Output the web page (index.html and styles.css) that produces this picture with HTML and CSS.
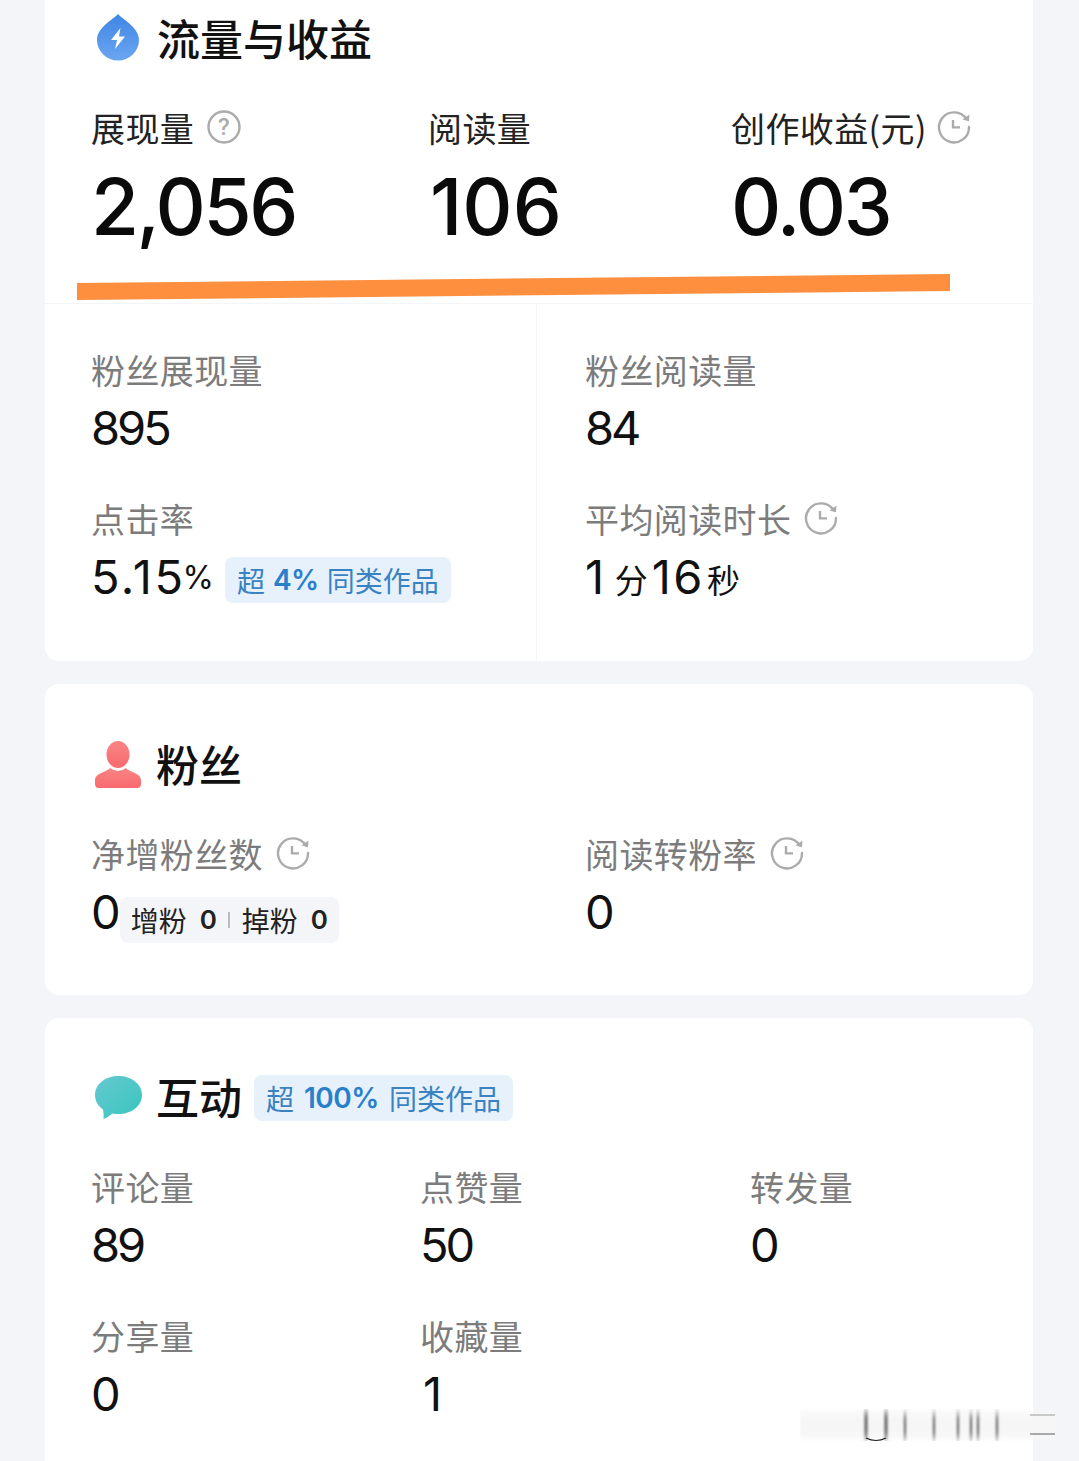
FILE: index.html
```html
<!DOCTYPE html>
<html lang="zh-CN">
<head>
  <meta charset="UTF-8" />
  <title>流量与收益</title>
  <link rel="stylesheet" href="styles.css">
</head>
<body>
  <svg class="defs" width="0" height="0">
    <defs>
      <linearGradient id="dropFill" x1="0" y1="0" x2="0" y2="1"><stop offset="0" stop-color="#3f86e6"/><stop offset="1" stop-color="#6aa5f0"/></linearGradient>
      <linearGradient id="userFill" x1="0" y1="0" x2="0" y2="1"><stop offset="0" stop-color="#f88484"/><stop offset="1" stop-color="#f96a6e"/></linearGradient>
      <linearGradient id="chatFill" x1="0" y1="0" x2="1" y2="1"><stop offset="0" stop-color="#66c8d0"/><stop offset="1" stop-color="#38c6bf"/></linearGradient>
      <symbol id="clock" viewBox="0 0 34 34">
        <path d="M29.6 9.2A15 15 0 1 0 32 17" fill="none" stroke="currentColor" stroke-width="2.4" stroke-linecap="round"/>
        <path d="M32.4 4.6 32 11.2 25.6 9.6Z" fill="currentColor"/>
        <path d="M16 10v7.4h7" fill="none" stroke="currentColor" stroke-width="2.4"/>
      </symbol>
    </defs>
  </svg>

  <section class="card card-first">
    <div class="card-head head-first">
      <svg class="head-icon" width="42" height="48" viewBox="0 0 42 48">
        <path d="M21 1C25 6 42 14 42 27A21 20.500 0 0 1 0 27C0 14 17 6 21 1Z" fill="url(#dropFill)"/>
        <path d="M23.500 15 14 27h6l-2 9 10-12.500h-6Z" fill="#fff"/>
      </svg>
      <h2>流量与收益</h2>
    </div>
    <div class="top-stats">
      <div>
        <div class="label label-dark">展现量
          <svg class="hint" width="34" height="34" viewBox="0 0 34 34">
            <circle cx="17" cy="17" r="15.500" fill="none" stroke="currentColor" stroke-width="2.400"/>
            <text x="17" y="25" text-anchor="middle" class="hint-mark">?</text>
          </svg>
        </div>
        <div class="big-num">2,056</div>
      </div>
      <div>
        <div class="label label-dark">阅读量</div>
        <div class="big-num big-one">106</div>
      </div>
      <div>
        <div class="label label-dark">创作收益(元)
          <svg class="hint hint-tight" width="34" height="34"><use href="#clock"/></svg>
        </div>
        <div class="big-num">0.03</div>
      </div>
    </div>
    <div class="split">
      <div class="split-col">
        <div class="metric">
          <div class="label">粉丝展现量</div>
          <div class="num">895</div>
        </div>
        <div class="metric">
          <div class="label">点击率</div>
          <div class="num num-one">5.15<span class="unit-pct">%</span><span class="badge badge-inline">超<b>4%</b>同类作品</span></div>
        </div>
      </div>
      <div class="split-col split-right">
        <div class="metric">
          <div class="label">粉丝阅读量</div>
          <div class="num">84</div>
        </div>
        <div class="metric">
          <div class="label">平均阅读时长
            <svg class="hint" width="34" height="34"><use href="#clock"/></svg>
          </div>
          <div class="num num-one">1<span class="unit">分</span>16<span class="unit">秒</span></div>
        </div>
      </div>
    </div>
  </section>

  <section class="card card-fans">
    <div class="card-head">
      <svg class="head-icon user-icon" width="46" height="48" viewBox="0 0 46 48">
        <ellipse cx="23" cy="13.500" rx="11.500" ry="13.500" fill="url(#userFill)"/>
        <path d="M15 27C12 31 0 32 0 39V43Q0 47 4 47H42Q46 47 46 43V39C46 32 34 31 31 27Q23 33 15 27Z" fill="url(#userFill)"/>
      </svg>
      <h2>粉丝</h2>
    </div>
    <div class="two-cols">
      <div class="metric">
        <div class="label">净增粉丝数
          <svg class="hint" width="34" height="34"><use href="#clock"/></svg>
        </div>
        <div class="num">0<span class="fans-pill">增粉<b>0</b><i class="pill-sep"></i>掉粉<b>0</b></span></div>
      </div>
      <div class="metric">
        <div class="label">阅读转粉率
          <svg class="hint" width="34" height="34"><use href="#clock"/></svg>
        </div>
        <div class="num">0</div>
      </div>
    </div>
  </section>

  <section class="card card-last">
    <div class="card-head">
      <svg class="head-icon chat-icon" width="47" height="44" viewBox="0 0 47 44">
        <path d="M23.500 0C36.500 0 47 8 47 19S36.500 38 23.500 38C21.500 38 19.500 37.800 17.500 37.400 15 39.500 12 41.500 8.500 43 8.700 40 8.600 37 8 33.500 3 30 0 25 0 19 0 8 10.500 0 23.500 0Z" fill="url(#chatFill)"/>
      </svg>
      <h2>互动</h2>
      <span class="badge badge-head">超<b>100%</b>同类作品</span>
    </div>
    <div class="three-cols">
      <div class="metric"><div class="label">评论量</div><div class="num">89</div></div>
      <div class="metric"><div class="label">点赞量</div><div class="num">50</div></div>
      <div class="metric"><div class="label">转发量</div><div class="num">0</div></div>
      <div class="metric"><div class="label">分享量</div><div class="num">0</div></div>
      <div class="metric"><div class="label">收藏量</div><div class="num num-single">1</div></div>
    </div>
  </section>

  <!-- hand drawn marker over the top numbers -->
  <svg class="marker" width="1079" height="310" viewBox="0 0 1079 310">
    <path d="M77 283 950 274V291L77 300Z" fill="#fd8f3f"/>
  </svg>

  <!-- smudged watermark, bottom right -->
  <svg class="smudge" width="270" height="50" viewBox="0 0 270 50">
    <defs><filter id="soft"><feGaussianBlur stdDeviation="1 4"/></filter></defs>
    <rect x="0" y="8" width="255" height="26" fill="#f6f6f6" filter="url(#soft)"/>
    <g filter="url(#soft)" stroke="#777" stroke-width="2.500">
      <path d="M66 8V34M86 8V34" stroke-width="3.500"/>
      <path d="M105 10V34M134 10V34M158 10V34M171 10V34M178 10V34M197 10V34"/>
    </g>
    <path d="M66 34Q76 39 86 34" fill="none" stroke="#222" stroke-width="1.200"/>
    <path d="M230 11H255" stroke="#aaa" stroke-width="1.200"/>
    <path d="M230 30H255" stroke="#777" stroke-width="1.200"/>
  </svg>
</body>
</html>
```

FILE: styles.css
```css
* {
  box-sizing: border-box;
}
html, body {
  height: 1461px;
  overflow: hidden;
}
body {
  margin: 0;
  position: relative;
  padding: 0 46px 0 45px;
  background-color: #f3f5f8;
  font-family: "Noto Sans CJK SC", sans-serif;
  color: #111;
}
.defs {
  position: absolute;
}
.card {
  background-color: white;
  border-radius: 14px;
  padding: 51px 47px 0 46px;
  height: 311px;
  margin-bottom: 23px;
}
.card-first {
  border-radius: 0 0 14px 14px;
  padding: 7px 0 0 0;
  height: 661px;
}
.card-fans {
  padding-top: 49px;
}
.card-last {
  height: 443px;
  margin-bottom: 0;
  padding-top: 48px;
  border-radius: 14px 14px 0 0;
  overflow: hidden;
}
.card-head {
  display: flex;
  align-items: center;
  height: 60px;
  padding-left: 4px;
}
.head-first {
  padding-left: 52px;
}
.head-icon {
  flex: none;
  margin-right: 15px;
}
.head-first .head-icon {
  margin-right: 18px;
}
.user-icon {
  margin-top: 4px;
}
.chat-icon {
  margin-top: 4px;
  margin-right: 14px;
}
h2 {
  margin: 0;
  font-size: 43px;
  font-weight: 500;
  line-height: 60px;
}
.top-stats {
  display: grid;
  grid-template-columns: 337px 303px 1fr;
  padding: 38px 0 42px 46px;
}
.label {
  display: flex;
  align-items: center;
  height: 48px;
  font-size: 34px;
  letter-spacing: 0.4px;
  line-height: 48px;
  color: #7c7c7c;
  white-space: nowrap;
  position: relative;
  top: -1px;
}
.label-dark {
  color: #222;
}
.hint {
  color: #ababab;
  margin-left: 13px;
  margin-top: -2px;
  flex: none;
}
.hint-tight {
  margin-left: 10px;
}
.hint-mark {
  font-family: "Roboto", sans-serif;
  font-size: 24px;
  font-weight: 500;
  fill: #ababab;
}
.big-num {
  font-family: "Inter", sans-serif;
  font-size: 78px;
  font-weight: 500;
  letter-spacing: -2.5px;
  line-height: 108px;
  color: #0a0a0a;
}
.big-one {
  letter-spacing: 0;
  padding-left: 2px;
}
.split {
  display: grid;
  grid-template-columns: 491px 1fr;
  border-top: 1px solid #f3f5f8;
  height: 357px;
}
.split-col {
  padding: 43px 0 0 46px;
}
.split-right {
  border-left: 1px solid #f3f5f8;
  padding-left: 48px;
}
.metric {
  height: 114px;
  margin-bottom: 35px;
}
.num {
  display: flex;
  align-items: center;
  font-family: "Inter", sans-serif;
  font-size: 47px;
  font-weight: 400;
  letter-spacing: -3px;
  line-height: 66px;
  height: 66px;
  color: #111;
}
.num-one {
  letter-spacing: 2.5px;
}
.num-single {
  padding-left: 3px;
}
.unit-pct {
  font-size: 32px;
  letter-spacing: 0;
  align-self: flex-end;
  line-height: 64px;
  margin-left: -3px;
}
.unit {
  font-family: "Noto Sans CJK SC", sans-serif;
  font-size: 33px;
  font-weight: 400;
  letter-spacing: 0;
  align-self: flex-end;
  line-height: 62px;
  margin: 0 4px 0 8px;
}
.unit + .unit {
  margin-left: 2px;
}
.badge {
  display: inline-flex;
  align-items: center;
  gap: 10px;
  height: 46px;
  padding: 0 12px;
  background-color: #e6f1fb;
  border-radius: 8px;
  font-family: "Noto Sans CJK SC", sans-serif;
  font-size: 28px;
  font-weight: 400;
  letter-spacing: 0;
  color: #3a82c2;
}
.badge b {
  font-family: "Inter", sans-serif;
  font-size: 28px;
  font-weight: 600;
  letter-spacing: -0.5px;
  color: #2a7fcb;
}
.badge-inline {
  gap: 8px;
  margin: 6px 0 0 11px;
}
.badge-head {
  margin: 4px 0 0 12px;
}
.two-cols {
  display: grid;
  grid-template-columns: 494px 1fr;
  margin-top: 38px;
}
.fans-pill {
  display: inline-flex;
  align-items: center;
  width: 219px;
  height: 46px;
  margin: 15px 0 0 2px;
  padding-left: 11px;
  background-color: #f3f5f8;
  border-radius: 8px;
  font-family: "Noto Sans CJK SC", sans-serif;
  font-size: 28px;
  font-weight: 400;
  letter-spacing: 0;
  color: #222;
}
.fans-pill b {
  font-family: "Inter", sans-serif;
  font-size: 26px;
  font-weight: 600;
  margin-left: 13px;
}
.pill-sep {
  width: 2px;
  height: 16px;
  margin: 0 12px 0 11px;
  background-color: #bbb;
}
.three-cols {
  display: grid;
  grid-template-columns: 329px 330px 1fr;
  margin-top: 38px;
}
.marker {
  position: absolute;
  left: 0;
  top: 0;
}
.smudge {
  position: absolute;
  left: 800px;
  top: 1404px;
}
```
